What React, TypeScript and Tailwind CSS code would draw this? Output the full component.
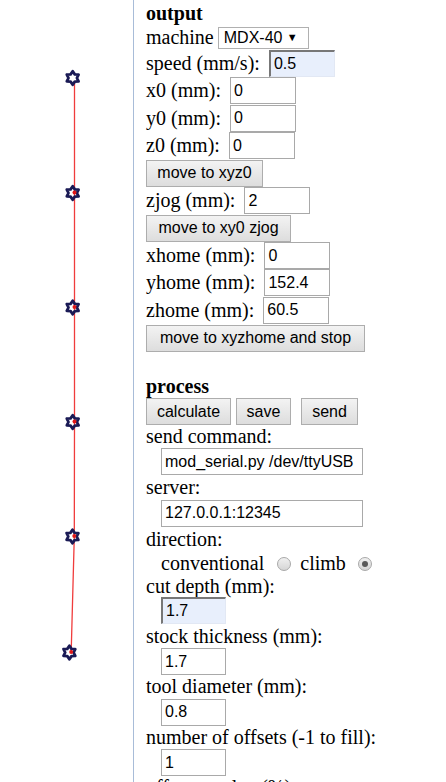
import React from "react";

const serif = "font-['Liberation_Serif','Times_New_Roman',serif]";
const sans = "font-['Liberation_Sans',Arial,sans-serif]";

function starPoints(cx: number, cy: number, ro: number, ri: number) {
  const pts: string[] = [];
  for (let i = 0; i < 12; i++) {
    const a = (Math.PI / 6) * i - Math.PI / 2;
    const r = i % 2 === 0 ? ro : ri;
    pts.push(`${(cx + r * Math.cos(a)).toFixed(2)},${(cy + r * Math.sin(a)).toFixed(2)}`);
  }
  return pts.join(" ");
}

const vertices: [number, number][] = [
  [74.5, 77.5],
  [74.5, 192.5],
  [74.5, 307],
  [74.5, 421.5],
  [74.3, 536],
  [71.2, 652],
];

function Toolpath() {
  return (
    <svg width="133" height="782" viewBox="0 0 133 782">
      <polyline
        points={vertices.map(([x, y]) => `${x},${y}`).join(" ")}
        fill="none"
        stroke="#f03c3c"
        strokeWidth="1.3"
      />
      {vertices.map(([x, y], i) => (
        <g key={i}>
          <polygon
            points={starPoints(x - 1.8, y + 0.5, 6.8, 4.2)}
            fill={i === 0 ? "#ffffff" : "none"}
            stroke="#1a1a55"
            strokeWidth="2.8"
            strokeLinejoin="round"
          />
          {i > 0 && <circle cx={x} cy={y} r="2" fill="#e01818" />}
        </g>
      ))}
    </svg>
  );
}

function TextInput({
  value,
  w = "w-[66px]",
  focused = false,
}: {
  value: string;
  w?: string;
  focused?: boolean;
}) {
  const base = `h-[27px] ${w} ${sans} text-[16px] text-black outline-none px-[3px] box-border`;
  const look = focused
    ? "bg-[#e8effc] border-t-[2px] border-l-[2px] border-r border-b border-t-[#777777] border-l-[#777777] border-r-[#e2e8f4] border-b-[#e2e8f4]"
    : "bg-white border border-[#a9a9a9]";
  return <input className={`${base} ${look}`} defaultValue={value} readOnly />;
}

function Btn({ label, w }: { label: string; w: string }) {
  return (
    <button
      className={`h-[27px] ${w} border border-[#adadad] bg-linear-to-b from-[#f3f3f3] to-[#dddddd] ${sans} text-[16px] text-black leading-none flex items-center justify-center`}
    >
      {label}
    </button>
  );
}

function Radio({ checked }: { checked?: boolean }) {
  return (
    <span className="inline-flex h-[14px] w-[14px] items-center justify-center rounded-full border border-[#a8a8a8] bg-linear-to-b from-[#f0f0f0] to-[#d6d6d6]">
      {checked && <span className="h-[6px] w-[6px] rounded-full bg-[#5a5a5a]" />}
    </span>
  );
}

function FieldRow({
  label,
  value,
  h,
  focused,
}: {
  label: string;
  value: string;
  h: string;
  focused?: boolean;
}) {
  return (
    <div className={`flex ${h} items-center`}>
      <span>{label}</span>
      <span className="ml-[9px] flex">
        <TextInput value={value} focused={focused} />
      </span>
    </div>
  );
}

export default function App() {
  return (
    <div className="flex h-[782px] w-[446px] overflow-hidden bg-white">
      <div className="w-[133px] shrink-0">
        <Toolpath />
      </div>
      <div
        className={`flex min-w-0 flex-1 flex-col border-l border-[#a8bcd8] pl-[12px] pt-[1px] ${serif} text-[20px] leading-[23px] text-black *:shrink-0`}
      >
        <div className="flex h-[24px] items-center font-bold">output</div>
        <div className="flex h-[25px] items-center">
          <span>machine</span>
          <div
            className={`ml-[4px] flex h-[22px] w-[91px] items-center justify-between border border-[#b0b0b0] bg-white pl-[5px] pr-[10px] ${sans} text-[16px]`}
          >
            <span>MDX-40</span>
            <span className="text-[11px]">▼</span>
          </div>
        </div>
        <FieldRow label="speed (mm/s):" value="0.5" h="h-[27px]" focused />
        <FieldRow label="x0 (mm):" value="0" h="h-[27px]" />
        <FieldRow label="y0 (mm):" value="0" h="h-[28px]" />
        <FieldRow label="z0 (mm):" value="0" h="h-[27px]" />
        <div className="flex h-[28px] items-center">
          <Btn label="move to xyz0" w="w-[117px]" />
        </div>
        <FieldRow label="zjog (mm):" value="2" h="h-[27px]" />
        <div className="flex h-[28px] items-center">
          <Btn label="move to xy0 zjog" w="w-[145px]" />
        </div>
        <FieldRow label="xhome (mm):" value="0" h="h-[27px]" />
        <FieldRow label="yhome (mm):" value="152.4" h="h-[27px]" />
        <FieldRow label="zhome (mm):" value="60.5" h="h-[28px]" />
        <div className="flex h-[28px] items-center">
          <Btn label="move to xyzhome and stop" w="w-[219px]" />
        </div>
        <div className="h-[23px]" />
        <div className="h-[23px] font-bold">process</div>
        <div className="flex h-[27px] items-center">
          <Btn label="calculate" w="w-[85px]" />
          <span className="ml-[5px] flex">
            <Btn label="save" w="w-[55px]" />
          </span>
          <span className="ml-[10px] flex">
            <Btn label="send" w="w-[57px]" />
          </span>
        </div>
        <div className="h-[23px]">send command:</div>
        <div className="flex h-[27px] items-center pl-[15px]">
          <TextInput value="mod_serial.py /dev/ttyUSB" w="w-[202px]" />
        </div>
        <div className="flex h-[24px] items-center">server:</div>
        <div className="flex h-[28px] items-center pl-[15px]">
          <TextInput value="127.0.0.1:12345" w="w-[202px]" />
        </div>
        <div className="flex h-[25px] items-center">direction:</div>
        <div className="flex h-[23px] items-center pl-[15px]">
          <span>conventional</span>
          <span className="ml-[13px] flex">
            <Radio />
          </span>
          <span className="ml-[9px]">climb</span>
          <span className="ml-[12px] flex">
            <Radio checked />
          </span>
        </div>
        <div className="flex h-[22px] items-center">cut depth (mm):</div>
        <div className="flex h-[27px] items-center pl-[15px]">
          <TextInput value="1.7" w="w-[65px]" focused />
        </div>
        <div className="flex h-[24px] items-center">stock thickness (mm):</div>
        <div className="flex h-[27px] items-center pl-[15px]">
          <TextInput value="1.7" w="w-[65px]" />
        </div>
        <div className="flex h-[23px] items-center">tool diameter (mm):</div>
        <div className="flex h-[28px] items-center pl-[15px]">
          <TextInput value="0.8" w="w-[65px]" />
        </div>
        <div className="flex h-[23px] items-center">number of offsets (-1 to fill):</div>
        <div className="flex h-[27px] items-center pl-[15px]">
          <TextInput value="1" w="w-[65px]" />
        </div>
        <div className="flex h-[23px] items-center">offset overlap (%):</div>
        <div className="flex h-[27px] items-center pl-[15px]">
          <TextInput value="50" w="w-[65px]" />
        </div>
      </div>
    </div>
  );
}
